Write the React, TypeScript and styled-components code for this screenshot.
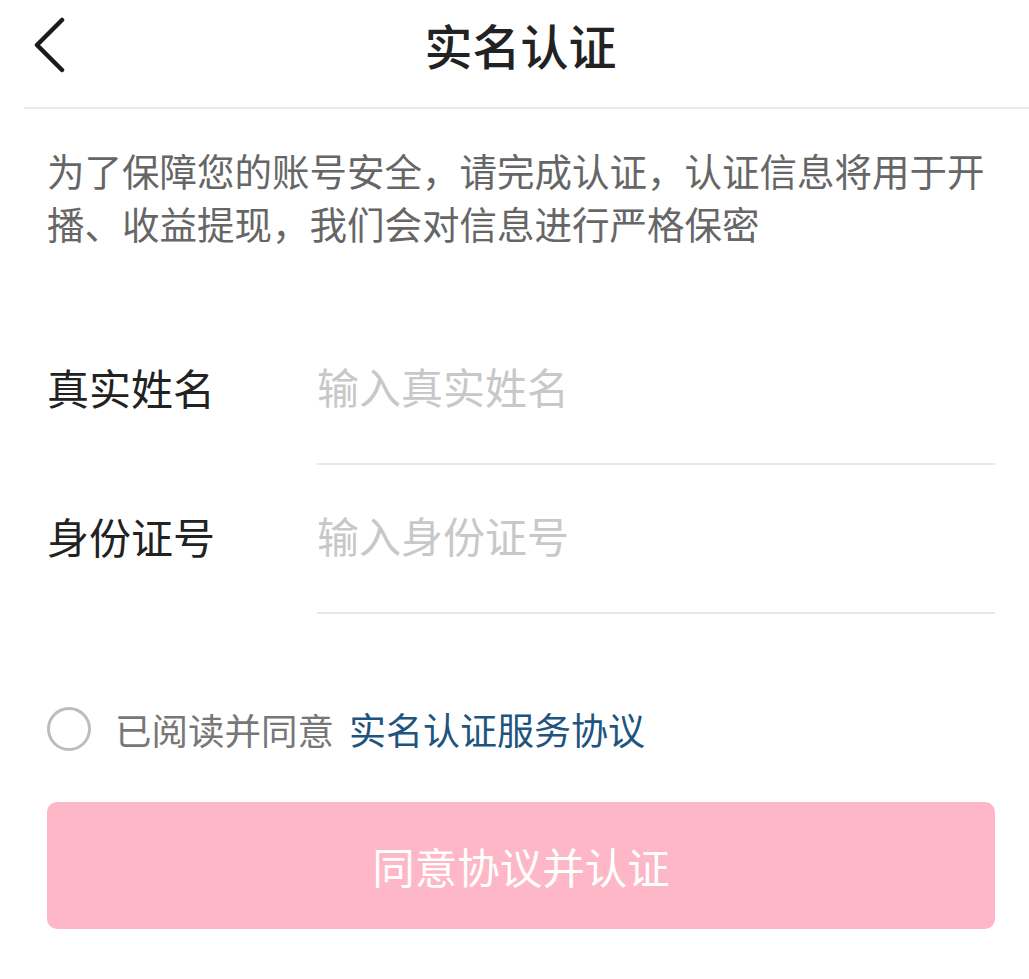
import styled, { createGlobalStyle } from 'styled-components'

const GlobalStyle = createGlobalStyle`
  html, body {
    margin: 0;
    padding: 0;
    background: #fff;
    font-family: "Noto Sans CJK SC", "Noto Sans", sans-serif;
  }
`

type Field = { label: string; placeholder: string }

const fields: Field[] = [
  { label: '真实姓名', placeholder: '输入真实姓名' },
  { label: '身份证号', placeholder: '输入身份证号' },
]

const App = () => (
  <Page>
    <GlobalStyle />
    <Header>
      <BackButton aria-label="返回">
        <svg width="36" height="56" viewBox="0 0 36 56" fill="none">
          <path d="M30 3 L5 28 L30 53" stroke="#1a1a1a" strokeWidth="4.5" strokeLinecap="round" strokeLinejoin="round" />
        </svg>
      </BackButton>
      <Title>实名认证</Title>
    </Header>
    <Divider />
    <Notice>为了保障您的账号安全，请完成认证，认证信息将用于开播、收益提现，我们会对信息进行严格保密</Notice>
    <Form>
      {fields.map(f => (
        <Row key={f.label}>
          <Label>{f.label}</Label>
          <InputBox>
            <Input placeholder={f.placeholder} />
          </InputBox>
        </Row>
      ))}
    </Form>
    <Agreement>
      <Radio />
      <AgreeText>已阅读并同意</AgreeText>
      <Link>实名认证服务协议</Link>
    </Agreement>
    <SubmitButton disabled>同意协议并认证</SubmitButton>
  </Page>
)

export default App

const Page = styled.div`
  width: 1029px;
  min-height: 979px;
  background: #fff;
`

const Header = styled.div`
  position: relative;
  height: 88px;
  display: flex;
  align-items: center;
  justify-content: center;
`

const BackButton = styled.button`
  position: absolute;
  left: 32px;
  top: 17px;
  padding: 0;
  border: none;
  background: none;
  display: flex;
`

const Title = styled.h1`
  margin: 0;
  font-size: 48px;
  font-weight: 500;
  color: #222;
  line-height: 1;
  padding-left: 12px;
`

const Divider = styled.div`
  margin: 19px 0 0 24px;
  height: 2px;
  background: #ececec;
`

const Notice = styled.p`
  margin: 34px 0 0;
  padding: 0 34px 0 47px;
  font-size: 37.5px;
  line-height: 53px;
  color: #666;
`

const Form = styled.div`
  margin-top: 67px;
  padding: 0 34px 0 47px;
  display: flex;
  flex-direction: column;
`

const Row = styled.div`
  display: flex;
  align-items: center;
`

const Label = styled.div`
  width: 270px;
  flex-shrink: 0;
  margin-bottom: 9px;
  font-size: 42px;
  color: #222;
`

const InputBox = styled.div`
  flex: 1;
  height: 149px;
  box-sizing: border-box;
  padding-bottom: 9px;
  border-bottom: 2px solid #e8e8e8;
  display: flex;
  align-items: center;
`

const Input = styled.input`
  width: 100%;
  border: none;
  outline: none;
  padding: 0;
  background: transparent;
  font-family: inherit;
  font-size: 42px;
  color: #222;

  &::placeholder {
    color: #c8c8c8;
  }
`

const Agreement = styled.div`
  margin-top: 93px;
  padding-left: 47px;
  display: flex;
  align-items: center;
  height: 44px;
`

const Radio = styled.span`
  width: 44px;
  height: 44px;
  box-sizing: border-box;
  border: 3px solid #bdbdbd;
  border-radius: 50%;
  margin-right: 24px;
`

const AgreeText = styled.span`
  font-size: 36.5px;
  color: #777;
  margin-right: 15px;
`

const Link = styled.span`
  font-size: 37px;
  color: #1f5480;
`

const SubmitButton = styled.button`
  display: block;
  margin: 51px 34px 0 47px;
  width: calc(100% - 81px);
  height: 127px;
  border: none;
  border-radius: 10px;
  background: #fdb7c7;
  color: #fff;
  font-family: inherit;
  font-size: 42.5px;
  cursor: default;
`
